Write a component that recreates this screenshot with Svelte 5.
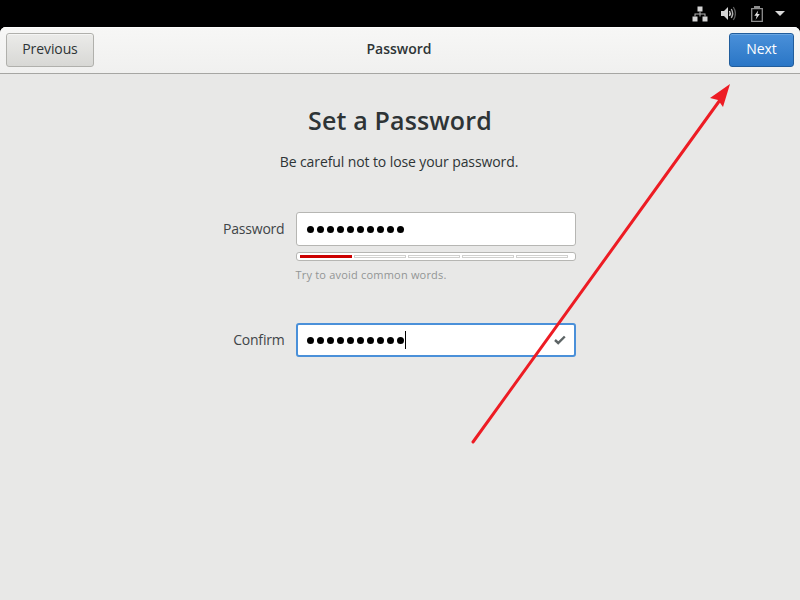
<script>
  const dots = Array.from({ length: 10 });
  const segments = [1, 0, 0, 0, 0];
</script>

<div class="screen">
  <div class="panel">
    <svg class="ic net" width="16" height="16" viewBox="0 0 16 16">
      <path fill="#d4d4d4" d="M5.500 .5h5v5h-5zM.5 10.500h5v5h-5zM10.500 10.500h5v5h-5z"/>
      <path fill="#b4b4b4" d="M7.500 5.500h1V7.500h5v3h-1v-2H8.500v2h-1v-2H3.500v2h-1v-3h5z"/>
    </svg>
    <svg class="ic vol" width="16" height="15" viewBox="0 0 16 15">
      <path fill="#d4d4d4" d="M1 5h3l4-4v13l-4-4H1z"/>
      <path fill="none" stroke="#d8d8d8" stroke-width="1.400" d="M9.500 5c1 1.700 1 3.300 0 5"/>
      <path fill="none" stroke="#b0b0b0" stroke-width="1.400" d="M11.300 3c1.800 3 1.800 6 0 9"/>
      <path fill="none" stroke="#5c5c5c" stroke-width="1.300" d="M13.300 1c2.600 4 2.600 9 0 13"/>
    </svg>
    <svg class="ic bat" width="12" height="16" viewBox="0 0 12 16">
      <path fill="none" stroke="#8e8e8e" stroke-width="1.300" d="M.7 2.700h10.600v12.600H.7z"/>
      <path fill="#8e8e8e" d="M3 0h6v2.500H3z"/>
      <path fill="#e0e0e0" d="M7.200 4.500 3.300 9.800h2.400L4.600 13.800 8.800 8H6.400z"/>
    </svg>
    <span class="caret"></span>
  </div>

  <div class="win">
    <header class="bar">
      <button class="btn">Previous</button>
      <div class="title">Password</div>
      <button class="btn primary">Next</button>
    </header>

    <main class="content">
      <h1>Set a Password</h1>
      <p class="sub">Be careful not to lose your password.</p>

      <div class="form">
        <div class="label l1">Password</div>
        <div class="entry">
          {#each dots as _}<span class="dot"></span>{/each}
        </div>
        <div class="meter">
          {#each segments as s}
            <span class="seg" class:on={s}></span>
          {/each}
        </div>
        <div class="hint">Try to avoid common words.</div>

        <div class="label l2">Confirm</div>
        <div class="entry focus">
          {#each dots as _}<span class="dot"></span>{/each}
          <span class="cursor"></span>
          <svg class="check" width="12" height="10" viewBox="0 0 12 10">
            <path fill="none" stroke="#5d6465" stroke-width="2.400" d="M1 5l3.200 3L10.800 1.500"/>
          </svg>
        </div>
      </div>
    </main>
  </div>

  <svg class="arrow" width="800" height="600" viewBox="0 0 800 600">
    <path d="M473 442 L720 100" stroke="#ed1c24" stroke-width="3" stroke-linecap="round" fill="none"/>
    <path d="M730 84 L710 98 L718 100 L723 107z" fill="#ed1c24"/>
  </svg>
</div>

<style>
  :global(body) {
    margin: 0;
    background: #000;
  }
  .screen {
    position: relative;
    width: 800px;
    height: 600px;
    display: flex;
    flex-direction: column;
    overflow: hidden;
    background: #000;
    font-family: "Open Sans", "Noto Sans", sans-serif;
    color: #2e3436;
  }
  .panel {
    height: 27px;
    flex: none;
    display: flex;
    align-items: center;
    justify-content: flex-end;
    padding-right: 15px;
  }
  .ic { flex: none; }
  .net { margin-right: 12px; }
  .vol { margin-right: 15px; }
  .bat { margin-right: 12px; }
  .caret {
    width: 0;
    height: 0;
    border-left: 5px solid transparent;
    border-right: 5px solid transparent;
    border-top: 5px solid #d8d8d8;
  }
  .win {
    flex: 1;
    display: flex;
    flex-direction: column;
    background: #e8e8e7;
    border-radius: 6px 6px 0 0;
    overflow: hidden;
  }
  .bar {
    height: 47px;
    box-sizing: border-box;
    flex: none;
    display: grid;
    grid-template-columns: 1fr auto 1fr;
    align-items: center;
    padding: 0 6px;
    background: linear-gradient(#f7f7f6, #f0f0ef);
    border-bottom: 1px solid #a6a6a3;
    box-shadow: inset 0 1px 0 #fff;
  }
  .title {
    font-size: 14px;
    font-weight: 600;
    color: #2e3436;
    padding-bottom: 3px;
    padding-right: 2px;
  }
  .btn {
    height: 34px;
    width: 88px;
    box-sizing: border-box;
    padding: 0 0 3px;
    border: 1px solid #b0b0ac;
    border-radius: 3px;
    background: linear-gradient(#ebebe9, #d8d8d5);
    color: #2e3436;
    font: 14px "Open Sans", "Noto Sans", sans-serif;
    letter-spacing: -0.1px;
    box-shadow: inset 0 1px 0 #f5f5f4;
  }
  .primary {
    justify-self: end;
    width: 65px;
    border-color: #215d9c;
    background: linear-gradient(#4a90d9, #2a76c6);
    color: #fff;
    box-shadow: inset 0 1px 0 #6aa6e2;
  }
  .content {
    flex: 1;
    display: flex;
    flex-direction: column;
    align-items: center;
  }
  h1 {
    margin: 29px 0 0;
    font-size: 25px;
    line-height: 34px;
    font-weight: 600;
    color: #2e3436;
    letter-spacing: 0.15px;
  }
  .sub {
    margin: 15px 2px 0 0;
    font-size: 14px;
    line-height: 19px;
    letter-spacing: -0.1px;
    color: #2e3436;
  }
  .form {
    margin-top: 41px;
    margin-left: -3px;
    width: 354px;
    display: grid;
    grid-template-columns: 62px 280px;
    column-gap: 12px;
    grid-template-rows: 34px auto auto 34px;
    align-items: center;
  }
  .label {
    font-size: 14px;
    letter-spacing: -0.2px;
    color: #3f4547;
    text-align: right;
    grid-column: 1;
    margin-right: -1px;
    padding-bottom: 2px;
  }
  .entry {
    grid-column: 2;
    box-sizing: border-box;
    height: 34px;
    display: flex;
    align-items: center;
    gap: 3px;
    padding: 0 10px;
    background: #fff;
    border: 1px solid #b6b6b3;
    border-radius: 3px;
  }
  .dot {
    width: 7px;
    height: 7px;
    border-radius: 50%;
    background: #000;
    flex: none;
  }
  .focus {
    border: 2px solid #4a90d9;
    padding: 0 8px 0 9px;
  }
  .cursor {
    width: 1px;
    height: 18px;
    margin-left: -2px;
    background: #000;
    flex: none;
  }
  .check { margin-left: auto; flex: none; }
  .meter {
    grid-column: 2;
    margin-top: 6px;
    box-sizing: border-box;
    height: 9px;
    display: flex;
    gap: 2px;
    padding: 2px 7px 2px 3px;
    background: #fff;
    border: 1px solid #b6b6b3;
    border-radius: 3px;
  }
  .seg {
    flex: 1;
    background: #fff;
    border: 1px solid #d0d0ce;
    box-sizing: border-box;
    height: 3px;
  }
  .seg.on {
    background: #cc0000;
    border-color: #cc0000;
  }
  .hint {
    grid-column: 2;
    margin-top: 6px;
    margin-bottom: 41px;
    font-size: 11px;
    line-height: 15px;
    letter-spacing: 0.2px;
    color: #929595;
  }
  .l2 { grid-row: 4; }
  .arrow {
    position: absolute;
    left: 0;
    top: 0;
    pointer-events: none;
  }
</style>
